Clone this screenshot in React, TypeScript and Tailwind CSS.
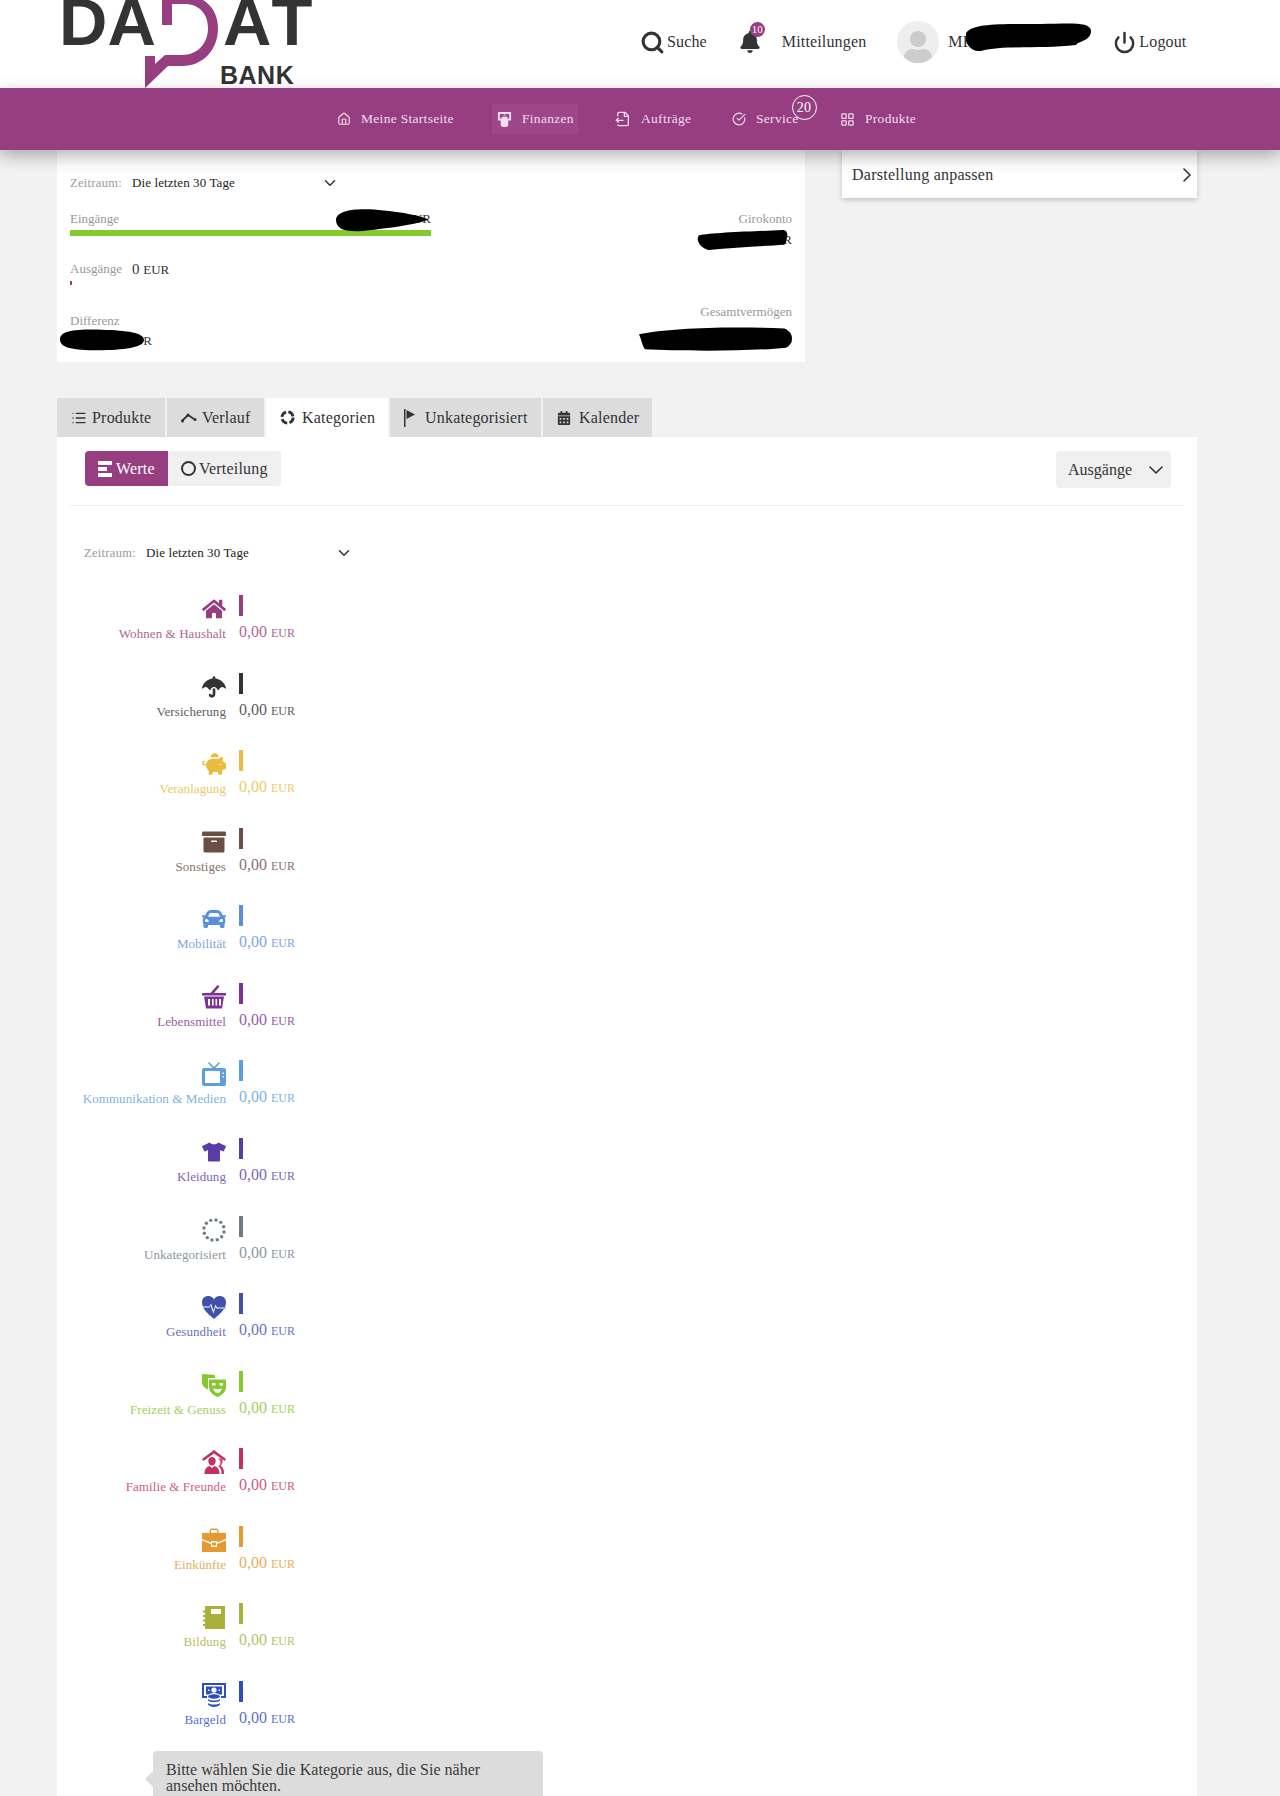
import React from 'react';
import { Search, Power, ChevronDown, ChevronRight, Home, FileOutput, CircleCheckBig, LayoutGrid, List } from 'lucide-react';
import { FaBell, FaHome, FaUmbrella, FaPiggyBank, FaArchive, FaCar, FaTshirt, FaCalendarAlt, FaUser } from 'react-icons/fa';

const Svg: React.FC<{ children: React.ReactNode; className?: string }> = ({ children, className }) => (
  <svg viewBox="0 0 24 24" fill="currentColor" className={className ?? 'w-6 h-6'}>{children}</svg>
);

const Basket = () => (
  <Svg>
    <path d="M0 8h8.500l7-8 2 1.500L12 8h12v2.500H0z" />
    <path fillRule="evenodd" d="M2 11.500h20L20 23.500H4zM6 14v6.500h2V14zm4 0v6.500h1.600V14zm3.500 0v6.500h1.600V14zm3.500 0v6.500h2V14z" />
  </Svg>
);

const Tv = () => (
  <Svg>
    <path fillRule="evenodd" d="M2 6h20a2 2 0 0 1 2 2v14a2 2 0 0 1-2 2H2a2 2 0 0 1-2-2V8a2 2 0 0 1 2-2zm1 3v12h15V9zm17.500 1.500v1.500h1.500v-1.500zm0 3.500v1.500h1.500V14z" />
    <path d="M7 0l5 5 5-5 1 1-5.500 6h-1L6 1z" />
  </Svg>
);

const Dots = () => (
  <Svg>
    {[0, 1, 2, 3, 4, 5, 6, 7, 8, 9, 10, 11].map((i) => (
      <circle key={i} cx={12 + 10.2 * Math.cos((i * Math.PI) / 6 + 0.2)} cy={12 + 10.2 * Math.sin((i * Math.PI) / 6 + 0.2)} r="1.700" />
    ))}
  </Svg>
);

const Heart = () => (
  <Svg>
    <path fillRule="evenodd" d="M12 24C6 19 0 14 0 7.500 0 3 3 1 6.500 1 9 1 11 2.500 12 4.500 13 2.500 15 1 17.500 1 21 1 24 3 24 7.500 24 14 18 19 12 24zM1 11.500h6.500l1.500-3 2.500 7 2-6 1.500 3h8.500v1h-9l-1-1.500-2 6.500-3-8-1 2H1z" />
  </Svg>
);

const Masks = () => (
  <Svg>
    <path d="M0 1l13 1v3H6v11.500C3 15 0 13 0 9z" />
    <path fillRule="evenodd" d="M7 6.500l17 0V14c0 5-4 8-8.500 10C11 22 7 19 7 14zM10 10v2.500h3.500V10zm7.500 0v2.500H21V10zM11 15.500c1 3 3 4.500 4.500 4.500s3.500-1.500 4.500-4.500c-3 1-6 1-9 0z" />
  </Svg>
);

const Family = () => (
  <Svg>
    <path d="M12 0l12 9-1.500 2L12 3.500 1.500 11 0 9z" />
    <path d="M10 7a3.700 3.700 0 0 1 3.700 4c0 2.500-1.500 4.500-3.700 4.500S6.300 13.500 6.300 11A3.700 3.700 0 0 1 10 7zM2.500 24c0-4 1.500-7 5-8l2.500 2 2.500-2c3.500 1 5 4 5 8z" />
    <path d="M15.500 9a3 3 0 0 1 3 3.500c0 2-1 3.500-2.500 3.800 2.800 1 3.500 3.500 3.500 7.700H22c0-4-.5-7-3.500-8 1-1 2-3 2-5 0-2-2.500-3.500-5-2z" />
  </Svg>
);

const Briefcase = () => (
  <Svg>
    <path d="M7.500 5V3c0-1.500 1-2.500 2.500-2.500h4c1.500 0 2.500 1 2.500 2.500v2H15V3c0-.6-.4-1-1-1h-4c-.6 0-1 .4-1 1v2z" />
    <path d="M0 5h24v6l-9 3.500v-1.500H9v1.500L0 11z" />
    <path d="M0 12.500l9 3.500v3h6v-3l9-3.500V24H0z" />
    <path d="M10 14.500h4V17.500h-4z" />
  </Svg>
);

const Notebook = () => (
  <Svg>
    <path fillRule="evenodd" d="M3 1h20v23H3v-3H1v-2h2v-2.500H1v-2h2V12H1v-2h2V7.500H1v-2h2zm6 3v5h10V4z" />
  </Svg>
);

const Cash = () => (
  <Svg>
    <path fillRule="evenodd" d="M0 0h24v15h-5v-2h3V2H2v11h3v2H0z" />
    <path fillRule="evenodd" d="M4 3.500h16v8h-3c-1-1-3-1.500-5-1.500s-4 .5-5 1.500H4zM12 4.500a2.600 2.600 0 1 0 0 5.200 2.600 2.600 0 0 0 0-5.200zM6 6.500v1.500h1.500V6.500zm10.500 0v1.500H18V6.500z" />
    <ellipse cx="12" cy="13.500" rx="6" ry="2.200" />
    <path d="M6 16c1 1 3.500 1.500 6 1.500s5-.5 6-1.500v1.500c-1 1-3.500 1.500-6 1.500s-5-.5-6-1.500zM6 20c1 1 3.500 1.500 6 1.500s5-.5 6-1.500v1.500c-1 1.500-3.500 2.500-6 2.500s-5-1-6-2.500z" />
  </Svg>
);

const FinanzIcon = () => (
  <svg viewBox="0 0 16 16" className="w-[15px] h-[15px]" fill="currentColor">
    <path fillRule="evenodd" d="M1 0h14v9h-3v5c0 1-2 2-4 2s-4-1-4-2V9H1zm2 2v5h2V5h6v2h2V2zm4 1v1h2V3z" />
  </svg>
);

const LineIcon = () => (
  <svg viewBox="0 0 16 10" className="w-4 h-[10px]" fill="currentColor">
    <path d="M1 8l6-6 6 4" fill="none" stroke="currentColor" strokeWidth="1.800" />
    <circle cx="1.500" cy="8" r="1.500" />
    <circle cx="7" cy="2" r="1.500" />
    <circle cx="14" cy="6.500" r="1.500" />
  </svg>
);

const RingIcon = () => (
  <svg viewBox="0 0 16 16" className="w-[15px] h-[15px]" fill="none" stroke="currentColor" strokeWidth="3">
    <circle cx="8" cy="8" r="6" strokeDasharray="7 2.500" />
  </svg>
);

const FlagIcon = () => (
  <svg viewBox="0 0 12 18" className="w-3 h-[18px]" fill="currentColor">
    <path d="M0 0h1.500v18H0zM2.500 1l8.500 4.500-8.500 4.500z" />
  </svg>
);

const BarsIcon = () => (
  <svg viewBox="0 0 14 16" className="w-[14px] h-4" fill="currentColor">
    <path d="M0 0h14v4H0zM0 6h9v4H0zM0 12h14v4H0z" />
  </svg>
);

// black marker strokes over the private figures
const Redact: React.FC<{ className: string; d: string }> = ({ className, d }) => (
  <svg viewBox="0 0 100 30" preserveAspectRatio="none" className={`absolute ${className}`}>
    <path d={d} fill="#000" />
  </svg>
);

const navItems = [
  { label: 'Meine Startseite', icon: <Home size={14} />, w: 'w-[155px]' },
  { label: 'Finanzen', icon: <FinanzIcon />, w: 'w-[123px]', active: true },
  { label: 'Aufträge', icon: <FileOutput size={16} />, w: 'w-[117px]' },
  { label: 'Service', icon: <CircleCheckBig size={14} />, w: 'w-[108px]', badge: '20' },
  { label: 'Produkte', icon: <LayoutGrid size={15} />, w: 'w-[90px]' },
];

const tabs = [
  { label: 'Produkte', icon: <List size={16} />, w: 'w-[108px]', gap: 'gap-[5px]' },
  { label: 'Verlauf', icon: <LineIcon />, w: 'w-[97px]', gap: 'gap-[5px]' },
  { label: 'Kategorien', icon: <RingIcon />, w: 'w-[122px]', gap: 'gap-[7px]', active: true },
  { label: 'Unkategorisiert', icon: <FlagIcon />, w: 'w-[151px]', gap: 'gap-[9px]' },
  { label: 'Kalender', icon: <FaCalendarAlt size={14} />, w: 'w-[109px]', gap: 'gap-[8px]' },
];

const categories = [
  { label: 'Wohnen & Haushalt', icon: <FaHome size={24} />, color: 'text-[#963e80]', bar: 'bg-[#963e80]' },
  { label: 'Versicherung', icon: <FaUmbrella size={24} />, color: 'text-[#333333]', bar: 'bg-[#333333]' },
  { label: 'Veranlagung', icon: <FaPiggyBank size={24} />, color: 'text-[#eabc3b]', bar: 'bg-[#eabc3b]' },
  { label: 'Sonstiges', icon: <FaArchive size={24} />, color: 'text-[#6b4e46]', bar: 'bg-[#6b4e46]' },
  { label: 'Mobilität', icon: <FaCar size={24} />, color: 'text-[#5b8fdc]', bar: 'bg-[#5b8fdc]' },
  { label: 'Lebensmittel', icon: <Basket />, color: 'text-[#7d3296]', bar: 'bg-[#7d3296]' },
  { label: 'Kommunikation & Medien', icon: <Tv />, color: 'text-[#5c9fe0]', bar: 'bg-[#5c9fe0]' },
  { label: 'Kleidung', icon: <FaTshirt size={24} />, color: 'text-[#5a3ca8]', bar: 'bg-[#5a3ca8]' },
  { label: 'Unkategorisiert', icon: <Dots />, color: 'text-[#6f7c8a]', bar: 'bg-[#6f7c8a]' },
  { label: 'Gesundheit', icon: <Heart />, color: 'text-[#3f51a8]', bar: 'bg-[#3f51a8]' },
  { label: 'Freizeit & Genuss', icon: <Masks />, color: 'text-[#86c82f]', bar: 'bg-[#86c82f]' },
  { label: 'Familie & Freunde', icon: <Family />, color: 'text-[#c4305f]', bar: 'bg-[#c4305f]' },
  { label: 'Einkünfte', icon: <Briefcase />, color: 'text-[#e59a2f]', bar: 'bg-[#e59a2f]' },
  { label: 'Bildung', icon: <Notebook />, color: 'text-[#a9b03c]', bar: 'bg-[#a9b03c]' },
  { label: 'Bargeld', icon: <Cash />, color: 'text-[#2c4fba]', bar: 'bg-[#2c4fba]' },
];

const Period: React.FC<{ className?: string }> = ({ className }) => (
  <div className={`flex items-center h-5 ${className ?? ''}`}>
    <span className="w-[62px] text-[12.5px] tracking-[0.3px] text-[#999999]">Zeitraum:</span>
    <span className="w-[189px] text-[13px] tracking-[0.1px] text-[#222222]">Die letzten 30 Tage</span>
    <ChevronDown size={18} className="text-[#333333]" />
  </div>
);

export default function App() {
  return (
    <div className="h-[1796px] overflow-hidden bg-[#f2f2f2] flex flex-col font-['Liberation_Serif',serif] text-[#333333]">
      <header className="h-[88px] shrink-0 bg-white flex items-center overflow-hidden">
        <svg viewBox="50 0 270 88" className="w-[270px] h-[88px] ml-[50px] shrink-0">
          <text x="59" y="45" fontFamily="Liberation Sans, sans-serif" fontWeight="700" fontSize="67" fill="#333333">DA</text>
          <text x="223" y="45" fontFamily="Liberation Sans, sans-serif" fontWeight="700" fontSize="67" fill="#333333" style={{ fontKerning: 'none' }}>AT</text>
          <path d="M162-5H185C205-5 218 10 218 28C218 50 203 66 182 66H168L145 88V56H155V64L165 55H182C197 55 208 44 208 28C208 12 197 4 185 4H172V25H162Z" fill="#963e80" />
          <text x="220" y="84" fontFamily="Liberation Sans, sans-serif" fontWeight="700" fontSize="25" letterSpacing="0.5" fill="#333333">BANK</text>
        </svg>
        <div className="flex items-center ml-[320px] -mt-[4px] text-[16px] tracking-[0.15px]">
          <Search size={25} strokeWidth={3} className="text-[#333333]" />
          <span className="ml-[2px]">Suche</span>
          <div className="relative ml-[32px]">
            <FaBell size={22} className="text-[#333333]" />
            <span className="absolute -top-[9px] left-[11px] w-[15px] h-[15px] rounded-full bg-[#963e80] text-white text-[11px] leading-[15px] text-center">10</span>
          </div>
          <span className="ml-[21px]">Mitteilungen</span>
          <div className="ml-[31px] w-[42px] h-[42px] rounded-full bg-[#eeeeee] flex items-end justify-center overflow-hidden">
            <FaUser size={32} className="text-[#cccccc]" />
          </div>
          <div className="relative ml-[9px] w-[165px]">
            <span>MR</span>
            <Redact className="left-[18px] -top-[9px] w-[125px] h-[30px]" d="M0 12C5 2 30 3 60 3C80 3 100 0 100 10C100 20 90 20 88 24C60 28 30 24 12 30C4 31 -2 22 0 12Z" />
          </div>
          <Power size={23} strokeWidth={2.6} className="text-[#333333]" />
          <span className="ml-[3px]">Logout</span>
        </div>
      </header>

      <nav className="relative z-10 h-[62px] shrink-0 bg-[#963e80] shadow-[0_6px_16px_rgba(0,0,0,0.3)] flex items-center pl-[337px] text-[13.5px] tracking-[0.3px] text-[#f3dcec]">
        {navItems.map((item) => (
          <div key={item.label} className={`${item.w} shrink-0`}>
            <div className={`relative inline-flex items-center gap-[10px] h-[30px] ${item.active ? 'bg-[#9d4788] pl-[5px] pr-[4px]' : ''}`}>
              {item.icon}
              <span>{item.label}</span>
              {item.badge && (
                <span className="absolute -top-[9px] -right-[18px] w-[25px] h-[25px] rounded-full border border-white text-center text-[14px] leading-[23px] text-white">{item.badge}</span>
              )}
            </div>
          </div>
        ))}
      </nav>

      <div className="flex ml-[57px] gap-[37px] items-start">
        <section className="relative w-[748px] h-[212px] bg-white px-[13px] text-[13px]">
          <Period className="mt-[23px]" />
          <div className="flex justify-between mt-[16px]">
            <div className="w-[361px]">
              <div className="relative flex justify-between items-center h-5">
                <span className="text-[#999999]">Eingänge</span>
                <span>EUR</span>
                <Redact className="left-[266px] -top-[1px] w-[95px] h-[24px]" d="M0 15C0 3 20 0 40 2C60 4 85 8 97 14C90 20 50 26 25 29C8 30 0 25 0 15Z" />
              </div>
              <div className="h-[6px] mt-[1px] bg-[#85c92f]" />
              <div className="flex items-center h-5 mt-[23px]">
                <span className="w-[62px] text-[#999999]">Ausgänge</span>
                <span className="text-[15px]">0 <span className="text-[13px]">EUR</span></span>
              </div>
              <div className="w-[2px] h-1 mt-[2px] bg-[#963e80]" />
              <div className="mt-[26px] text-[#999999] h-5 leading-5">Differenz</div>
              <div className="relative w-[82px] text-right text-[13px] leading-5">
                EUR
                <Redact className="-left-[10px] -top-[2px] w-[84px] h-[22px]" d="M0 14C0 2 20 0 50 1C80 2 100 5 100 15C100 25 75 29 45 29C15 29 0 26 0 14Z" />
              </div>
            </div>
            <div className="relative text-right">
              <div className="h-5 leading-5 text-[#999999]">Girokonto</div>
              <div className="relative h-5 leading-5 mt-[1px]">
                EUR
                <Redact className="right-0 top-0 w-[95px] h-[20px]" d="M2 8C15 4 60 2 90 0C97 0 96 12 92 22C70 24 40 26 12 30C4 28 -2 15 2 8Z" />
              </div>
              <div className="h-5 leading-5 text-[#999999] mt-[52px]">Gesamtvermögen</div>
              <div className="relative h-5 leading-5 mt-[7px]">
                EUR
                <Redact className="right-0 -top-[3px] w-[153px] h-[25px]" d="M0 10C20 2 60 0 95 3C102 8 101 22 96 26C70 31 25 30 4 28C2 24 2 18 0 10Z" />
              </div>
            </div>
          </div>
        </section>
        <aside className="w-[355px] h-[48px] bg-white shadow-[0_2px_5px_rgba(0,0,0,0.2)] flex items-center justify-between pl-[10px] pt-[2px] text-[16px] tracking-[0.25px]">
          <span>Darstellung anpassen</span>
          <ChevronRight size={24} strokeWidth={1.6} className="-mr-[2px]" />
        </aside>
      </div>

      <div className="flex ml-[57px] mt-[36px] gap-[2px] h-[39px] shrink-0 text-[16px] tracking-[0.2px]">
        {tabs.map((tab) => (
          <div key={tab.label} className={`${tab.w} ${tab.gap} shrink-0 flex items-center pl-[14px] ${tab.active ? 'bg-white' : 'bg-[#dcdcdc]'}`}>
            {tab.icon}
            <span>{tab.label}</span>
          </div>
        ))}
      </div>

      <main className="ml-[57px] w-[1140px] flex-1 bg-white px-[13px]">
        <div className="flex justify-between items-start pt-[14px] pb-[17px] pl-[15px] pr-[13px] border-b border-[#eeeeee]">
          <div className="flex h-[35px] text-[16px] tracking-[0.2px]">
            <div className="w-[83px] flex items-center gap-[4px] pl-[13px] rounded-l bg-[#963e80] text-white">
              <BarsIcon />
              <span>Werte</span>
            </div>
            <div className="w-[113px] flex items-center gap-[3px] pl-[13px] rounded-r bg-[#f0f0f0]">
              <span className="w-[15px] h-[15px] rounded-full border-2 border-[#333333]" />
              <span>Verteilung</span>
            </div>
          </div>
          <div className="w-[115px] h-[37px] rounded bg-[#f0f0f0] flex items-center justify-between pl-[12px] pr-[3px] text-[16px]">
            <span>Ausgänge</span>
            <ChevronDown size={24} strokeWidth={1.6} />
          </div>
        </div>

        <Period className="mt-[37px] ml-[14px]" />

        <div className="mt-[32px]">
          {categories.map((cat) => (
            <div key={cat.label} className={`h-[77.57px] flex ${cat.color}`}>
              <div className="w-[156px] flex flex-col items-end">
                <div className="h-[26px] pt-[2px]">{cat.icon}</div>
                <div className="mt-[3px] h-5 leading-5 text-[13px] tracking-[0.08px] whitespace-nowrap opacity-80">{cat.label}</div>
              </div>
              <div className="ml-[13px]">
                <div className={`w-1 h-[21px] ${cat.bar}`} />
                <div className="mt-[6px] h-5 leading-5 text-[16px] whitespace-nowrap opacity-80">0,00 <span className="text-[12px]">EUR</span></div>
              </div>
            </div>
          ))}
        </div>

        <div className="relative ml-[83px] -mt-[7px] w-[390px] h-[60px] bg-[#dcdcdc] rounded-t pl-[13px] pt-[11px] text-[16px] leading-[15.5px] tracking-[0.02px] text-[#3a3a3a]">
          <span className="absolute -left-[8px] top-[20px] w-0 h-0 border-y-[8px] border-y-transparent border-r-[8px] border-r-[#dcdcdc]" />
          Bitte wählen Sie die Kategorie aus, die Sie näher<br />ansehen möchten.
        </div>
      </main>
    </div>
  );
}
